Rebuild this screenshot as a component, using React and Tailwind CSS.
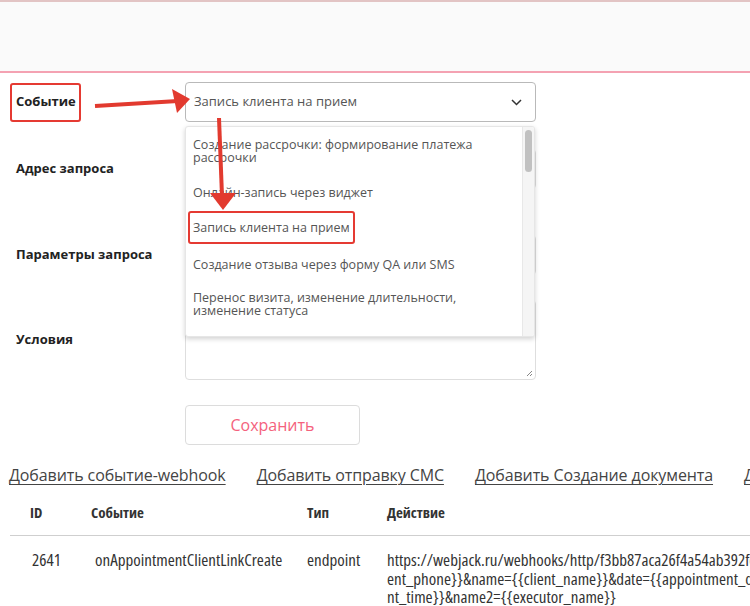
export default function App() {
  const items = [
    { lines: ["Создание рассрочки: формирование платежа", "рассрочки"] },
    { lines: ["Онлайн-запись через виджет"] },
    { lines: ["Запись клиента на прием"], marked: true },
    { lines: ["Создание отзыва через форму QA или SMS"] },
    { lines: ["Перенос визита, изменение длительности,", "изменение статуса"] },
  ];

  return (
    <div className="relative h-[606px] w-[750px] overflow-hidden bg-white font-['Open_Sans',sans-serif] text-[#222]">
      <div className="h-[73px] border-t-2 border-b-2 border-t-[#e2c4c4] border-b-[#f4a2b2] bg-[#fafafa]" />

      <div className="mt-[9px]">
        <div className="flex h-[40px] items-center">
          <div className="w-[185px] pl-[10px]">
            <span className="inline-flex h-[39px] w-[71px] items-center rounded-[3px] border-2 border-[#e53a32] pl-1 text-[13px] font-bold">
              Событие
            </span>
          </div>
          <div className="relative w-[351px]">
            <div className="flex h-[40px] items-center justify-between rounded-[4px] border border-[#b9b9b9] pl-2 pr-[13px] text-[13px] text-[#555]">
              <span>Запись клиента на прием</span>
              <svg width="11" height="7" viewBox="0 0 11 7" fill="none">
                <path d="M1 1l4.5 4.5L10 1" stroke="#333" strokeWidth="1.5" />
              </svg>
            </div>
            <div className="absolute left-0 top-[44px] z-10 flex h-[211px] w-[350px] overflow-hidden rounded-[3px] border border-[#e6e6e6] bg-white shadow-[0_2px_5px_rgba(0,0,0,0.18)]">
              <div className="flex-1 text-[12.5px] leading-[13px] text-[#555]">
                {items.map((it, i) =>
                  it.marked ? (
                    <div key={i} className="pt-[2px] pb-[4px]">
                      <span className="ml-[2px] inline-block rounded-[3px] border-2 border-[#e53a32] px-[3px] py-[8px]">
                        {it.lines[0]}
                      </span>
                    </div>
                  ) : (
                    <div key={i} className={`pl-[7px] pr-2 py-[10px] ${i === 0 ? "pt-[11px] pb-[12px]" : ""}`}>
                      {it.lines.map((l) => (
                        <div key={l}>{l}</div>
                      ))}
                    </div>
                  )
                )}
              </div>
              <div className="w-[12px] border-l border-[#e8e8e8] bg-[#f5f5f5] px-[2px] pt-[3px]">
                <div className="h-[42px] rounded-full bg-[#c1c1c1]" />
              </div>
            </div>
          </div>
        </div>

        <div className="mt-[27px] flex h-[40px] items-center">
          <div className="w-[185px] pl-4 text-[13px] font-bold">Адрес запроса</div>
          <div className="h-[40px] w-[351px] rounded-[4px] border border-[#ddd]" />
        </div>

        <div className="mt-[46px] flex h-[40px] items-center">
          <div className="w-[185px] pl-4 text-[13px] font-bold">Параметры запроса</div>
          <div className="h-[40px] w-[351px] rounded-[4px] border border-[#ddd]" />
        </div>

        <div className="mt-[25px] flex h-[80px] items-center">
          <div className="w-[185px] pl-4 text-[13px] font-bold">Условия</div>
          <div className="relative h-[80px] w-[351px] rounded-[4px] border border-[#dedede]">
            <svg className="absolute bottom-[2px] right-[2px]" width="7" height="7" viewBox="0 0 7 7">
              <path d="M6 1L1 6M6 4L4 6" stroke="#888" strokeWidth="1" />
            </svg>
          </div>
        </div>

        <div className="ml-[185px] mt-[25px] flex h-[40px] w-[175px] items-center justify-center rounded-[4px] border border-[#dcdcdc] text-[16px] text-[#f4627d]">
          Сохранить
        </div>
      </div>

      <div className="mt-[19px] flex gap-[31px] whitespace-nowrap pl-[9px] text-[16px] leading-[22px] tracking-[-0.1px] text-[#444] underline decoration-1 underline-offset-[3px]">
        <span>Добавить событие-webhook</span>
        <span>Добавить отправку СМС</span>
        <span>Добавить Создание документа</span>
        <span>Добавить</span>
      </div>

      <div className="ml-[10px] mt-[3px] text-[#333] font-stretch-semi-condensed">
        <div className="flex h-[47px] items-center border-b border-[#cfcfcf] text-[15px] font-bold">
          <div className="w-[61px] pl-5">ID</div>
          <div className="w-[216px] pl-5">Событие</div>
          <div className="w-[80px] pl-5">Тип</div>
          <div className="pl-5">Действие</div>
        </div>
        <div className="flex pt-[15px] text-[17px] leading-[18.5px]">
          <div className="w-[61px] pl-[22px]">2641</div>
          <div className="w-[216px] pl-6">onAppointmentClientLinkCreate</div>
          <div className="w-[80px] pl-5">endpoint</div>
          <div className="min-w-0 flex-1 overflow-hidden whitespace-nowrap pl-5">
            <div>https://webjack.ru/webhooks/http/f3bb87aca26f4a54ab392fe29c0d71ab?phone={"{{"}cli</div>
            <div>ent_phone{"}}"}&amp;name={"{{"}client_name{"}}"}&amp;date={"{{"}appointment_date{"}}"}&amp;time={"{{"}appointme</div>
            <div>nt_time{"}}"}&amp;name2={"{{"}executor_name{"}}"}</div>
          </div>
        </div>
      </div>

      <svg className="pointer-events-none absolute left-0 top-0 z-20" width="750" height="606">
        <line x1="95" y1="106" x2="178" y2="101" stroke="#e23a2f" strokeWidth="4" />
        <polygon points="172,89 190,99 177,113" fill="#e23a2f" />
        <line x1="219" y1="118" x2="222" y2="196" stroke="#e23a2f" strokeWidth="4" />
        <polygon points="210,193 236,193 223,210" fill="#e23a2f" />
      </svg>
    </div>
  );
}
